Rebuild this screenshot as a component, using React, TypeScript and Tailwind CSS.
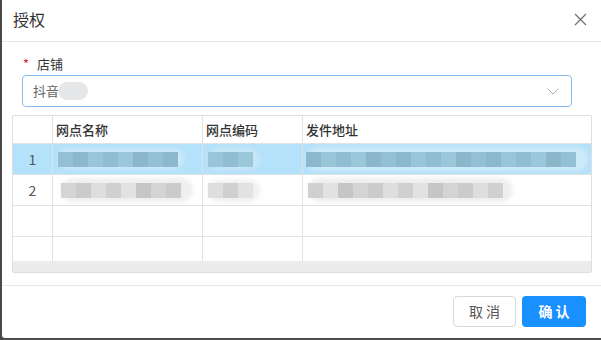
import React from "react";

type Blk = { w: number; c: string };

function Smudge({
  blocks,
  halo,
  haloClass,
}: {
  blocks: Blk[];
  halo: string;
  haloClass: string;
}) {
  return (
    <div className="relative flex items-center h-full">
      <div
        className={"absolute rounded-full blur-[2px] " + haloClass}
        style={{ background: halo }}
      />
      <div className="relative flex h-[15px]">
        {blocks.map((b, i) => (
          <div key={i} style={{ width: b.w, background: b.c }} />
        ))}
      </div>
    </div>
  );
}

const blue = ["#93c0d4", "#8bb8cc", "#98c5d8", "#90bdd1", "#9ac7da", "#8cb6c9"];
const gray = ["#d4d4d4", "#cbcbcb", "#dedede", "#d0d0d0", "#e2e2e2", "#c6c6c6"];

function mk(n: number, w: number, pal: string[], off = 0): Blk[] {
  return Array.from({ length: n }, (_, i) => ({ w, c: pal[(i + off) % pal.length] }));
}

export default function App() {
  const font = { fontFamily: '"Noto Sans CJK SC", "Noto Sans", sans-serif' };
  return (
    <div className="w-[601px] h-[340px] bg-[#4a4a4a] overflow-hidden" style={font}>
      <div className="ml-[2px] w-[599px] h-[338px] bg-white rounded-bl-[3px] flex flex-col">
        {/* header */}
        <div className="h-[42px] shrink-0 border-b border-[#e6e6e6] flex items-center justify-between pl-[11px] pr-[14px]">
          <span className="text-[16px] leading-[20px] text-[#333] -mt-[3px]">授权</span>
          <svg width="13" height="13" viewBox="0 0 13 13" className="-mt-[3px]">
            <path d="M1 1 L12 12 M12 1 L1 12" stroke="#707070" strokeWidth="1.3" fill="none" />
          </svg>
        </div>

        {/* body */}
        <div className="flex flex-col px-[10px] pt-[12px] grow">
          <div className="px-[10px]">
            <div className="flex items-center h-[20px] text-[13px] text-[#333]">
              <span className="text-[#e02020] text-[13px] w-[15px] pl-[1px]">*</span>
              <span>店铺</span>
            </div>
            <div className="mt-[1px] w-[550px] h-[32px] border border-[#86bdf0] rounded-[4px] flex items-center justify-between pl-[10px] pr-[12px]">
              <div className="flex items-center">
                <span className="text-[13px] text-[#666]">抖音</span>
                <div className="w-[30px] h-[18px] rounded-full bg-[#e6e7e8] -ml-[1px]" />
              </div>
              <svg width="12" height="7" viewBox="0 0 12 7">
                <path d="M0.5 0.5 L6 6 L11.5 0.5" stroke="#b0b0b0" strokeWidth="1" fill="none" />
              </svg>
            </div>
          </div>

          {/* table */}
          <div className="mt-[8px] w-[580px] h-[158px] border border-[#dedede] rounded-[2px] overflow-hidden flex flex-col text-[13px]">
            <div className="grid grid-cols-[40px_150px_100px_1fr] h-[28px] border-b border-[#e2e2e2] shrink-0 font-medium text-[#333]">
              <div className="border-r border-[#e2e2e2]" />
              <div className="border-r border-[#e2e2e2] flex items-center pl-[3px]">网点名称</div>
              <div className="border-r border-[#e2e2e2] flex items-center pl-[3px]">网点编码</div>
              <div className="flex items-center pl-[3px]">发件地址</div>
            </div>

            {/* row 1 */}
            <div className="grid grid-cols-[40px_150px_100px_1fr] h-[31px] border-b border-[#e2e2e2] shrink-0 bg-[#b4e2fa]">
              <div className="border-r border-[#e2e2e2] flex items-center justify-center text-[14px] text-[#555]">1</div>
              <div className="border-r border-[#e2e2e2] pl-[5px] overflow-hidden">
                <Smudge blocks={mk(8, 15, blue)} halo="#cfeaf8" haloClass="left-[0px] w-[126px] top-[5px] h-[20px]" />
              </div>
              <div className="border-r border-[#e2e2e2] pl-[5px] overflow-hidden">
                <Smudge blocks={mk(3, 15, blue, 2)} halo="#c8e6f5" haloClass="left-[0px] w-[52px] top-[4px] h-[22px]" />
              </div>
              <div className="pl-[3px] overflow-hidden">
                <Smudge blocks={mk(18, 15, blue, 1)} halo="#cdeaf8" haloClass="left-[0px] w-[282px] top-[3px] h-[24px]" />
              </div>
            </div>

            {/* row 2 */}
            <div className="grid grid-cols-[40px_150px_100px_1fr] h-[31px] border-b border-[#e2e2e2] shrink-0">
              <div className="border-r border-[#e2e2e2] flex items-center justify-center text-[14px] text-[#555]">2</div>
              <div className="border-r border-[#e2e2e2] pl-[8px] overflow-hidden">
                <Smudge blocks={mk(8, 15, gray)} halo="#efefef" haloClass="left-[0px] w-[132px] top-[3px] h-[24px]" />
              </div>
              <div className="border-r border-[#e2e2e2] pl-[5px] overflow-hidden">
                <Smudge blocks={mk(3, 15, gray, 2)} halo="#f0f0f0" haloClass="left-[0px] w-[52px] top-[5px] h-[22px]" />
              </div>
              <div className="pl-[5px] overflow-hidden">
                <Smudge blocks={mk(13, 15, gray, 3)} halo="#eeeeee" haloClass="left-[0px] w-[205px] top-[3px] h-[24px]" />
              </div>
            </div>

            {/* row 3 */}
            <div className="grid grid-cols-[40px_150px_100px_1fr] h-[31px] border-b border-[#e2e2e2] shrink-0">
              <div className="border-r border-[#e2e2e2]" />
              <div className="border-r border-[#e2e2e2]" />
              <div className="border-r border-[#e2e2e2]" />
              <div />
            </div>

            {/* row 4 partial */}
            <div className="grid grid-cols-[40px_150px_100px_1fr] grow">
              <div className="border-r border-[#e2e2e2]" />
              <div className="border-r border-[#e2e2e2]" />
              <div className="border-r border-[#e2e2e2]" />
              <div />
            </div>

            {/* scrollbar */}
            <div className="h-[11px] shrink-0 bg-[#ececec]" />
          </div>
        </div>

        {/* footer */}
        <div className="h-[53px] shrink-0 border-t border-[#e6e6e6] flex items-center justify-end gap-[6px] pr-[15px] pb-[1px]">
          <button className="w-[63px] h-[31px] border border-[#d9d9d9] rounded-[4px] bg-white text-[14px] text-[#555] tracking-[3px] pl-[3px]">
            取消
          </button>
          <button className="w-[64px] h-[31px] rounded-[4px] bg-[#1890ff] text-[14px] text-white font-bold tracking-[3px] pl-[3px]">
            确认
          </button>
        </div>
      </div>
    </div>
  );
}
